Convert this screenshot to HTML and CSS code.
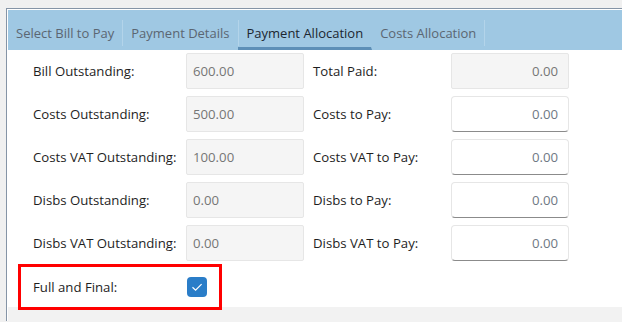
FILE: index.html
```html
<!DOCTYPE html>
<html>
<head>
    <title>Payment Allocation</title>
    <link rel="stylesheet" href="styles.css">
</head>
<body>
    <div class="window">
      <div class="tabs">
        <div class="tab">Select Bill to Pay</div>
        <div class="tab">Payment Details</div>
        <div class="tab active">Payment Allocation</div>
        <div class="tab">Costs Allocation</div>
      </div>

      <div class="panel">
        <div class="form">
          <label>Bill Outstanding:</label>
          <div class="field disabled">600.00</div>
          <label>Total Paid:</label>
          <div class="field disabled right">0.00</div>

          <label>Costs Outstanding:</label>
          <div class="field disabled">500.00</div>
          <label>Costs to Pay:</label>
          <div class="field right">0.00</div>

          <label>Costs VAT Outstanding:</label>
          <div class="field disabled">100.00</div>
          <label>Costs VAT to Pay:</label>
          <div class="field right">0.00</div>

          <label>Disbs Outstanding:</label>
          <div class="field disabled">0.00</div>
          <label>Disbs to Pay:</label>
          <div class="field right">0.00</div>

          <label>Disbs VAT Outstanding:</label>
          <div class="field disabled">0.00</div>
          <label>Disbs VAT to Pay:</label>
          <div class="field right">0.00</div>
        </div>

        <div class="final">
          <label>Full and Final:</label>
          <span class="check">
            <svg width="20" height="20" viewBox="0 0 20 20">
              <path d="M5.5 10.3 L8.6 13.2 L14.6 7.2" fill="none" stroke="#fff" stroke-width="1.2"/>
            </svg>
          </span>
        </div>
      </div>

      <div class="footer"></div>
    </div>
</body>
</html>
```

FILE: styles.css
```css
html, body {
  margin: 0;
}

body {
  background: #f0f0f0;
  font-family: "Open Sans", "Noto Sans", sans-serif;
  font-size: 13.2px;
  color: #1e1e1e;
  height: 322px;
  overflow: hidden;
}

.window {
  margin: 8px 0 0 6px;
  border-top: 1px solid #8594a6;
  border-left: 1px solid #8594a6;
  background: #ffffff;
  padding: 1px 0 0 1px;
  height: 313px;
  box-sizing: border-box;
}

/* tab strip */
.tabs {
  display: flex;
  align-items: stretch;
  background: #9fc8e3;
  height: 40px;
}

.tab {
  padding: 4px 8px 0 8px;
  margin: 10px 0 4px 0;
  font-size: 13px;
  line-height: 18px;
  color: #5b6672;
  border-right: 1px solid #b3d4ea;
  white-space: nowrap;
}

.tab.active {
  color: #1c2630;
  margin-bottom: 0;
  margin-left: -1px;
  padding-left: 9px;
  padding-bottom: 1px;
  border-bottom: 3px solid #5d8fb7;
  border-right-color: transparent;
}

/* form body */
.panel {
  background: #ffffff;
  height: 257px;
  padding: 3px 0 0 10px;
  box-sizing: border-box;
}

.form {
  display: grid;
  grid-template-columns: 153px 118px 147px 118px;
  grid-auto-rows: 36px;
  row-gap: 7px;
  padding-left: 15px;
  align-items: center;
}

.form label:nth-child(4n+3) {
  padding-left: 9px;
}

.field {
  height: 36px;
  box-sizing: border-box;
  line-height: 34px;
  padding: 0 6px;
  border: 1px solid #e6e6e6;
  border-bottom-color: #8b8b8b;
  border-radius: 4px;
  color: #6f7884;
  background: #ffffff;
}

.field.disabled {
  background: #f5f5f5;
  border-color: #e6e6e6;
  border-radius: 2px;
  color: #767676;
}

.field.right {
  text-align: right;
  padding-right: 10px;
}

.final {
  position: relative;
  display: flex;
  align-items: center;
  margin-top: 3px;
  width: 204px;
  height: 46px;
  box-sizing: border-box;
  border: 3px solid #ff0000;
  padding-left: 12px;
}

.final label {
  width: 154px;
}

.check {
  display: inline-block;
  width: 20px;
  height: 20px;
  border-radius: 4px;
  background: #2a7dc8;
}

.check svg {
  display: block;
}

.footer {
  background: #f2f2f2;
  height: 15px;
}
```
